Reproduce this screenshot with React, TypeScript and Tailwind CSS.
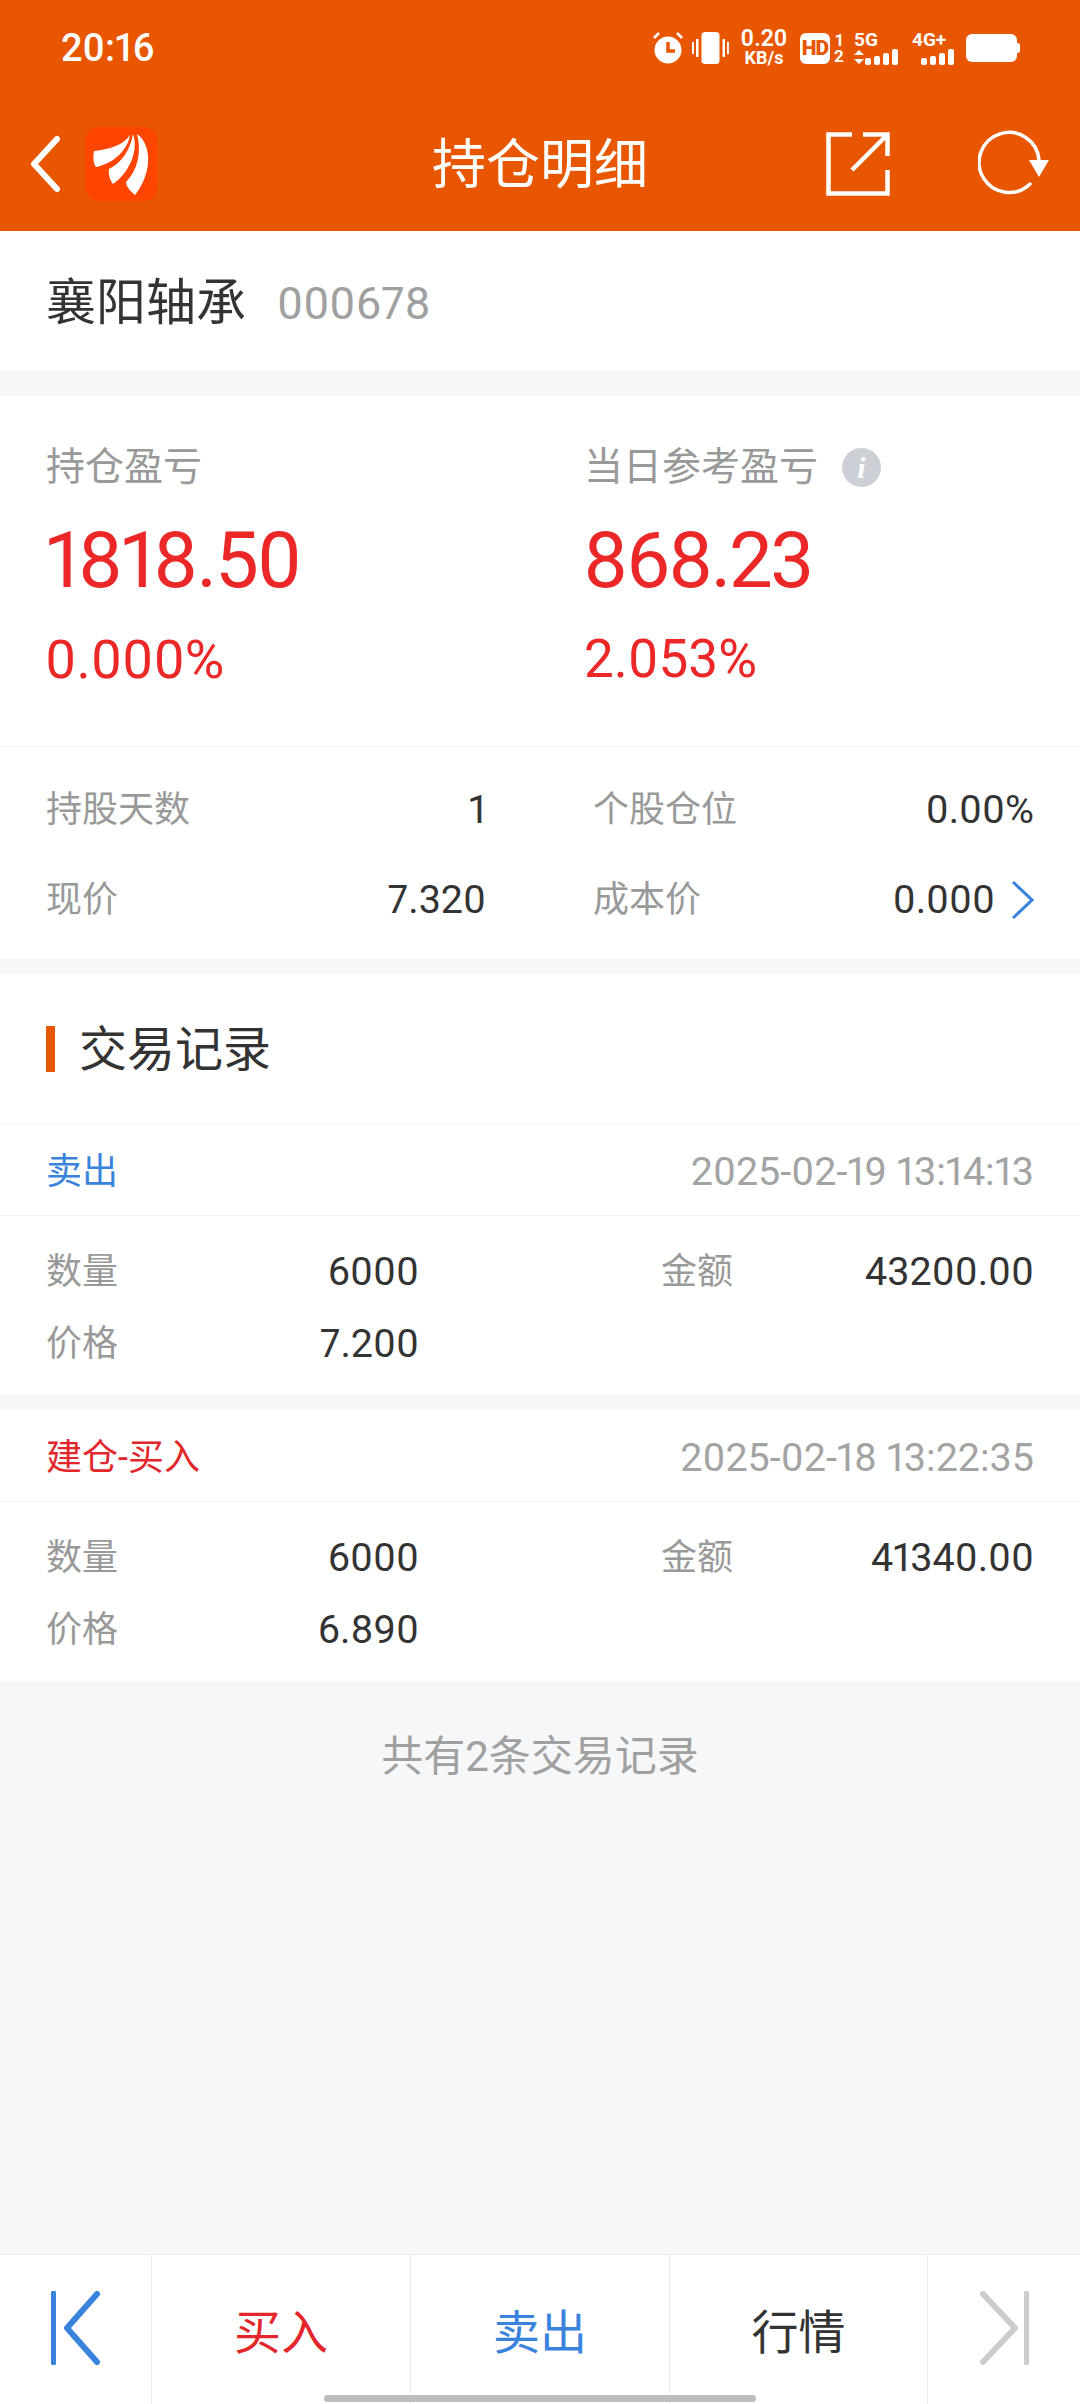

const FONT = "font-['Roboto','Noto_Sans_CJK_SC',sans-serif] proportional-nums";

function Logo() {
  return (
    <svg width="72" height="74" viewBox="0 0 72 74" className="ml-[25px]">
      <rect width="72" height="74" rx="14" fill="#ff4500" />
      <path d="M9 24 C26 22 38 18 45 8 C43 22 30 36 11 40 C8 36 8 30 9 24Z" fill="#fff" />
      <path d="M24 42 C36 36 45 24 48 7 C54 24 44 46 28 57 C25 53 23 47 24 42Z" fill="#fff" />
      <path d="M52 7 C60 12 64 24 63 36 C62 48 57 59 50 68 C45 64 41 59 41 55 C52 44 57 26 52 7Z" fill="#fff" />
    </svg>
  );
}

function StatusIcons() {
  return (
    <div className="flex items-center h-[40px] text-white">
      <svg width="30" height="32" viewBox="0 0 30 32" className="mr-[9px]">
        <circle cx="15" cy="18" r="13.5" fill="#fff" />
        <path d="M15 10v9h7" stroke="#e85600" strokeWidth="3.5" fill="none" />
        <path d="M1 6 6 1M29 6 24 1" stroke="#fff" strokeWidth="2.5" />
      </svg>
      <svg width="37" height="32" viewBox="0 0 37 32" className="mr-[10px]">
        <rect x="9.5" y="0" width="18" height="32" rx="3.5" fill="#fff" />
        <rect x="0" y="10" width="2" height="12" fill="#fff" />
        <rect x="4" y="7" width="2.5" height="18" fill="#fff" />
        <rect x="30.5" y="7" width="2.5" height="18" fill="#fff" />
        <rect x="35" y="10" width="2" height="12" fill="#fff" />
      </svg>
      <div className="flex flex-col items-center mr-[11px] w-[50px]">
        <span className="text-[23px] leading-[20px] font-semibold">0.20</span>
        <span className="text-[18px] leading-[18px] font-bold">KB/s</span>
      </div>
      <div className="w-[30px] h-[31px] bg-white rounded-[6px] flex items-center justify-center mr-[3px]">
        <span className="text-[#e85600] text-[21px] font-black leading-none tracking-[-1px]">HD</span>
      </div>
      <div className="flex flex-col items-center mr-[9px] w-[12px]">
        <span className="text-[17px] leading-[16px] font-bold">1</span>
        <span className="text-[17px] leading-[16px] font-bold">2</span>
      </div>
      <div className="flex flex-col w-[45px] mr-[13px]">
        <span className="text-[19px] leading-[18px] font-bold">5G</span>
        <svg width="45" height="17" viewBox="0 0 45 17">
          <path d="M0 6 5 1 10 6ZM0 10 5 15 10 10Z" fill="#fff" />
          <rect x="11" y="9" width="6" height="7" rx="2" fill="#fff" />
          <rect x="20" y="7" width="6" height="9" rx="2" fill="#fff" />
          <rect x="29" y="4" width="6" height="12" rx="2" fill="#fff" />
          <rect x="38" y="0" width="6" height="16" rx="2" fill="#fff" />
        </svg>
      </div>
      <div className="flex flex-col w-[44px] mr-[10px]">
        <span className="text-[19px] leading-[18px] font-bold">4G+</span>
        <svg width="44" height="17" viewBox="0 0 44 17">
          <rect x="9" y="9" width="6" height="7" rx="2" fill="#fff" />
          <rect x="18" y="7" width="6" height="9" rx="2" fill="#fff" />
          <rect x="27" y="4" width="6" height="12" rx="2" fill="#fff" />
          <rect x="36" y="0" width="6" height="16" rx="2" fill="#fff" />
        </svg>
      </div>
      <svg width="54" height="28" viewBox="0 0 54 28">
        <rect x="0" y="0" width="51" height="28" rx="6" fill="#fff" />
        <rect x="50" y="9" width="4" height="10" rx="2" fill="#fff" />
      </svg>
    </div>
  );
}

function Header() {
  return (
    <div className="bg-[#e85600] h-[231px] flex flex-col text-white">
      <div className="h-[96px] flex items-center justify-between pl-[61px] pr-[60px]">
        <span className="text-[38px] font-medium leading-none">20:16</span>
        <StatusIcons />
      </div>
      <div className="relative flex-1 flex items-center justify-between pl-[30px] pr-[30px]">
        <div className="flex items-center">
          <svg width="30" height="58" viewBox="0 0 30 58">
            <path d="M27 4 4 29l23 25" stroke="#fff" strokeWidth="6" fill="none" strokeLinecap="round" strokeLinejoin="round" />
          </svg>
          <Logo />
        </div>
        <span className="absolute left-0 right-0 mt-[4px] text-center text-[54px] leading-none">持仓明细</span>
        <div className="flex items-center gap-[88px]">
          <svg width="64" height="64" viewBox="0 0 64 64">
            <path d="M26 2.5H2.5v59h59V38M61.5 24V2.5H37M61.5 2.5 26 38" stroke="#fff" strokeWidth="4.5" fill="none" />
          </svg>
          <svg width="72" height="68" viewBox="0 0 72 68">
            <path d="M52 54A30 30 0 1 1 61 30" stroke="#fff" strokeWidth="3.5" fill="none" strokeLinecap="round" />
            <path d="M51 30H71L61 47Z" fill="#fff" />
          </svg>
        </div>
      </div>
    </div>
  );
}

function Stat({ label, value, chevron }: { label: string; value: string; chevron?: boolean }) {
  return (
    <div className="flex items-center justify-between">
      <span className="text-[36px] leading-[40px] text-[#999999]">{label}</span>
      <span className="flex items-center text-[39.5px] leading-[40px] text-[#333333]">
        {value}
        {chevron && (
          <svg width="23" height="38" viewBox="0 0 23 38" className="ml-[16px]">
            <path d="M2 1 21 19 2 37" stroke="#3a83dd" strokeWidth="3" fill="none" />
          </svg>
        )}
      </span>
    </div>
  );
}

function Trade({
  type,
  color,
  time,
  qty,
  amount,
  price,
}: {
  type: string;
  color: string;
  time: string;
  qty: string;
  amount: string;
  price: string;
}) {
  return (
    <div className="bg-white">
      <div className="h-[92px] flex items-center justify-between px-[46px] pt-[4px] border-b border-[#f3f3f3]">
        <span className={`text-[36px] leading-none ${color}`}>{type}</span>
        <span className="text-[39.5px] leading-none text-[#a3a3a3]">{time}</span>
      </div>
      <div className="px-[46px] pt-[36px] pb-[31px] flex flex-col gap-[32px]">
        <div className="flex justify-between">
          <div className="w-[373px]">
            <Stat label="数量" value={qty} />
          </div>
          <div className="w-[373px]">
            <Stat label="金额" value={amount} />
          </div>
        </div>
        <div className="w-[373px]">
          <Stat label="价格" value={price} />
        </div>
      </div>
    </div>
  );
}

function Nav({ label, color, last }: { label: string; color: string; last?: boolean }) {
  return (
    <div className={`w-[259px] h-full flex items-center justify-center pt-[6px] border-l border-[#ececec] ${last ? "border-r" : ""}`}>
      <span className={`text-[47px] leading-none ${color}`}>{label}</span>
    </div>
  );
}

export default function App() {
  return (
    <div className={`relative w-[1080px] h-[2404px] bg-[#f6f7f9] flex flex-col overflow-hidden ${FONT}`}>
      <Header />

      <div className="h-[140px] bg-white flex items-center px-[46px] gap-[31px] pt-[4px]">
        <span className="text-[50px] leading-none text-[#333333]">襄阳轴承</span>
        <span className="text-[45px] leading-none text-[#a0a0a0]">000678</span>
      </div>

      <div className="mt-[25px] bg-white h-[563px] flex flex-col">
        <div className="h-[351px] border-b border-[#f3f3f3] pl-[46px] flex">
          <div className="w-[540px] flex flex-col pt-[52px]">
            <span className="text-[39px] leading-none text-[#999999]">持仓盈亏</span>
            <span className="mt-[35px] text-[78px] leading-none text-[#eb2727] tracking-[-2px]">1818.50</span>
            <span className="mt-[33px] text-[54px] leading-none text-[#eb2727] -ml-[1px]">0.000%</span>
          </div>
          <div className="flex flex-col pt-[52px] -ml-[2px]">
            <div className="flex items-center">
              <span className="text-[39px] leading-none text-[#999999]">当日参考盈亏</span>
              <span className="ml-[24px] w-[39px] h-[39px] rounded-full bg-[#ccd0d6] flex items-center justify-center text-white text-[30px] leading-none italic font-['Liberation_Serif',serif] font-bold">i</span>
            </div>
            <span className="mt-[35px] text-[78px] leading-none text-[#eb2727] tracking-[-2.5px] -ml-[1px]">868.23</span>
            <span className="mt-[33px] text-[53px] leading-none text-[#eb2727]">2.053%</span>
          </div>
        </div>
        <div className="flex-1 grid grid-cols-[440px_441px] justify-between px-[46px] pt-[43px] gap-y-[50px] content-start">
          <Stat label="持股天数" value="1" />
          <Stat label="个股仓位" value="0.00%" />
          <Stat label="现价" value="7.320" />
          <Stat label="成本价" value="0.000" chevron />
        </div>
      </div>

      <div className="mt-[15px] bg-white h-[150px] flex items-center px-[46px] gap-[24px] border-b border-[#f3f3f3]">
        <div className="w-[9px] h-[46px] bg-[#e85600]" />
        <span className="text-[48px] leading-none text-[#333333] pt-[2px]">交易记录</span>
      </div>

      <Trade type="卖出" color="text-[#3a83dd]" time="2025-02-19 13:14:13" qty="6000" amount="43200.00" price="7.200" />
      <div className="h-[15px]" />
      <Trade type="建仓-买入" color="text-[#e3262b]" time="2025-02-18 13:22:35" qty="6000" amount="41340.00" price="6.890" />

      <div className="mt-[55px] text-center text-[42px] leading-none text-[#a0a0a0]">共有2条交易记录</div>

      <div className="mt-auto h-[150px] bg-white border-t border-[#ececec] flex items-center">
        <div className="w-[151px] h-full flex items-center justify-center pb-[4px]">
          <svg width="50" height="74" viewBox="0 0 50 74">
            <path d="M2.5 2v70" stroke="#3a83dd" strokeWidth="5" fill="none" strokeLinecap="round" />
            <path d="M46 3 16 37l30 34" stroke="#3a83dd" strokeWidth="6" fill="none" strokeLinecap="round" strokeLinejoin="round" />
          </svg>
        </div>
        <Nav label="买入" color="text-[#e3262b]" />
        <Nav label="卖出" color="text-[#3a83dd]" />
        <Nav label="行情" color="text-[#333333]" last />
        <div className="flex-1 h-full flex items-center justify-center pb-[4px]">
          <svg width="50" height="74" viewBox="0 0 50 74">
            <path d="M47.5 2v70" stroke="#cccccc" strokeWidth="5" fill="none" strokeLinecap="round" />
            <path d="M4 3 36 37 4 71" stroke="#cccccc" strokeWidth="6" fill="none" strokeLinecap="round" strokeLinejoin="round" />
          </svg>
        </div>
      </div>

      <div className="absolute left-[324px] bottom-[2px] w-[432px] h-[7px] rounded-full bg-[#bdbdbd]" />
    </div>
  );
}
